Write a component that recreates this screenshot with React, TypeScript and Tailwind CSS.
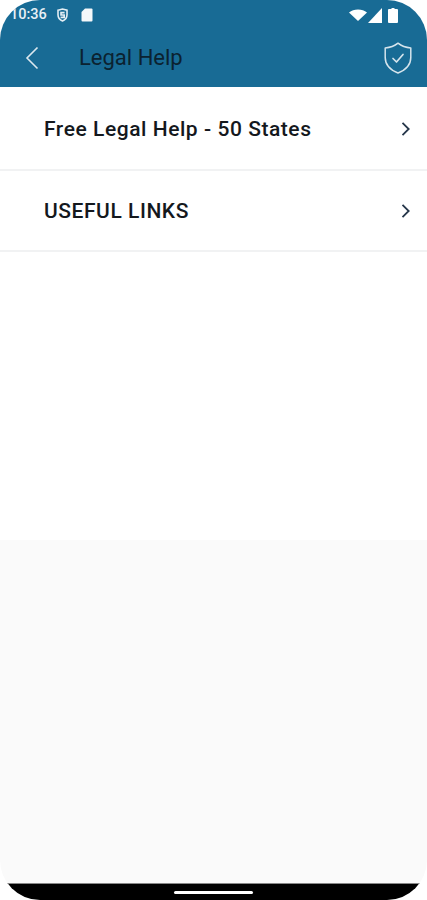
import React from "react";

const rows = ["Free Legal Help - 50 States", "USEFUL LINKS"];

const Chevron = () => (
  <svg className="mb-[2px]" width="12" height="16" viewBox="0 0 12 16" fill="none" stroke="#25364a" strokeWidth="1.8">
    <path d="M2.500 1.800 8.700 8l-6.200 6.200" />
  </svg>
);

const App: React.FC = () => {
  return (
    <div className="h-[900px] w-[427px] bg-white overflow-hidden font-['Roboto',sans-serif]">
      <div className="flex h-full flex-col overflow-hidden rounded-[40px]">
        {/* header with status bar */}
        <header className="h-[87px] shrink-0 bg-[#186b95] shadow-[0_1px_1px_rgba(20,60,90,0.25)]">
          <div className="flex h-[30px] items-center justify-between pl-[10px] pr-[29px] text-white">
            <div className="flex items-center">
              <span className="pt-[1px] text-[14.500px] font-medium leading-none text-[#e8f0f5]">10:36</span>
              <svg className="ml-[10px]" width="11" height="14" viewBox="0 0 11 14" fill="none" stroke="#e4eef4" strokeWidth="1.6">
                <path d="M1 2.200 5.500 1 10 2.200v4.600C10 10 8 12 5.500 13 3 12 1 10 1 6.800z" />
                <path d="M7.600 4.600H4v2.400h3.200v2.400H3.600" />
              </svg>
              <svg className="ml-[13px]" width="12" height="14" viewBox="0 0 12 14" fill="#f4f8fa">
                <path d="M4 .5h6.500a1 1 0 0 1 1 1v11a1 1 0 0 1-1 1h-9a1 1 0 0 1-1-1V4z" />
              </svg>
            </div>
            <div className="flex items-center">
              <svg width="18" height="12" viewBox="0 0 18 12" fill="#fff">
                <path d="M0 3.500C2.400 1.500 5.500.5 9 .5s6.600 1 9 3L9 12z" />
              </svg>
              <svg className="ml-[1px]" width="14" height="15" viewBox="0 0 14 15" fill="#fff">
                <path d="M14 0v15H0z" />
              </svg>
              <svg className="ml-[6px]" width="10" height="15" viewBox="0 0 10 15" fill="#fff">
                <path d="M3.500 0h3v1H9a1 1 0 0 1 1 1v12a1 1 0 0 1-1 1H1a1 1 0 0 1-1-1V2a1 1 0 0 1 1-1h2.500z" />
              </svg>
            </div>
          </div>
          <div className="flex h-[57px] items-center pl-[25px] pr-[15px] pb-[2px]">
            <svg width="14" height="24" viewBox="0 0 14 24" fill="none" stroke="#dbe8ef" strokeWidth="1.600">
              <path d="M12.500 1.500 2 12l10.500 10.500" />
            </svg>
            <h1 className="ml-[40px] flex-1 text-[22px] font-normal leading-none text-[#0b2230]">Legal Help</h1>
            <svg width="28" height="32" viewBox="0 0 28 32" fill="none" stroke="#d5e4ec" strokeWidth="1.500" strokeLinejoin="round">
              <path d="M14 1.200C10.500 4 6 5.600 1.200 6v9.500C1.200 22.500 6.500 28 14 31c7.500-3 12.800-8.500 12.800-15.500V6C22 5.600 17.500 4 14 1.200z" />
              <path d="M9 16.500l3.500 3.500L19 12.500" strokeWidth="1.700" strokeLinecap="round" />
            </svg>
          </div>
        </header>

        <main className="flex flex-1 flex-col bg-white">
          <ul className="h-[453px] shrink-0">
            <li className="flex h-[84px] items-center justify-between border-b-2 border-[#f1f2f3] pl-[44px] pr-[15px] pt-[4px]">
              <span className="text-[21px] font-medium tracking-[0.55px] text-[#14181d]">{rows[0]}</span>
              <Chevron />
            </li>
            <li className="flex h-[81px] items-center justify-between border-b-2 border-[#f1f2f3] pl-[44px] pr-[15px] pt-[2px]">
              <span className="text-[21px] font-medium tracking-[0.55px] text-[#14181d]">{rows[1]}</span>
              <Chevron />
            </li>
          </ul>
          <div className="flex-1 bg-[#fafafa]" />
        </main>

        {/* nav bar */}
        <div className="flex h-[17px] shrink-0 items-center justify-center border-t border-[#888] bg-black">
          <div className="h-[3px] w-[79px] rounded-full bg-white" />
        </div>
      </div>
    </div>
  );
};

export default App;
